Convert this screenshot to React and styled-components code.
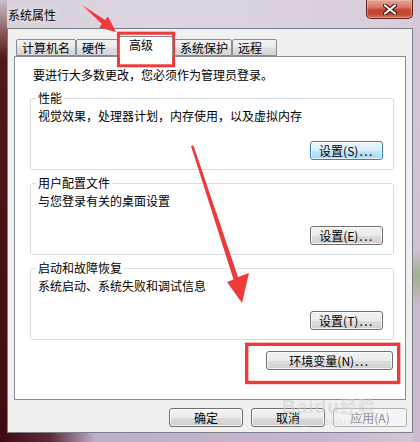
import React from 'react';
import styled, { createGlobalStyle } from 'styled-components';

const Global = createGlobalStyle`
  html, body { margin: 0; padding: 0; }
  body {
    width: 420px; height: 442px; overflow: hidden;
    font-family: "Noto Sans CJK SC", "Noto Sans", sans-serif;
  }
`;

const Window = styled.div`
  position: relative;
  width: 420px;
  height: 442px;
  box-sizing: border-box;
  padding: 0 7px 9px 7px;
  display: flex;
  flex-direction: column;
  overflow: hidden;
  background:
    linear-gradient(to bottom, #cbc1c9 0, #8a5a5c 32px, #51181b 58px, #3e0c10 100%) left top / 7px 100% no-repeat,
    linear-gradient(to bottom, #d6c8d8 0, #d2c0d4 250px, #9fb08e 275px, #cbb9cf 305px, #cdbad2 100%) right top / 7px 100% no-repeat,
    linear-gradient(to right, #3e0c10 0, #5c2a38 50px, #bfaec8 95px, #c9b7cf 330px, #d6c5d8 100%) left bottom / 100% 10px no-repeat,
    linear-gradient(to right, #d8d1db 0, #ddd6e0 40%, #d7cdd9 100%);
`;

const TitleBar = styled.div`
  height: 28px;
  display: flex;
  justify-content: space-between;
  align-items: flex-start;
  flex: none;
`;

const Title = styled.div`
  margin: 8px 0 0 1px;
  font-size: 12px;
  line-height: 14px;
  color: #000;
  text-shadow: 0 0 6px rgba(255,255,255,0.9);
`;

const CloseButton = styled.div`
  width: 47px;
  height: 19px;
  box-sizing: border-box;
  border: 1px solid #5a2119;
  border-top: none;
  border-radius: 0 0 5px 5px;
  background: linear-gradient(to bottom, #e6a597 0%, #d77a66 40%, #c4452f 55%, #c24a33 80%, #d9765c 100%);
  box-shadow: inset 0 0 0 1px rgba(255,200,190,0.45);
  display: flex;
  align-items: center;
  justify-content: center;
`;

const Body = styled.div`
  flex: 1;
  box-sizing: border-box;
  background: #f0f0f0;
  border: 1px solid #7c7f86;
  padding: 0 6px 0 6px;
  display: flex;
  flex-direction: column;
`;

const TabStrip = styled.div`
  display: flex;
  align-items: flex-end;
  padding: 7px 0 0 2px;
  height: 20px;
  box-sizing: content-box;
`;

const Tab = styled.div`
  box-sizing: border-box;
  width: ${p => p.$w}px;
  height: ${p => (p.$active ? 21 : 17)}px;
  margin: ${p => (p.$active ? '0 1px -1px 1px' : '0')};
  position: relative;
  z-index: ${p => (p.$active ? 1 : 0)};
  border: 1px solid #898c95;
  border-bottom: ${p => (p.$active ? 'none' : '1px solid #898c95')};
  border-radius: 2px 2px 0 0;
  background: ${p => (p.$active ? '#ffffff' : 'linear-gradient(to bottom, #f3f3f3 0%, #ebebeb 45%, #dedede 55%, #d6d6d6 100%)')};
  padding: 1px 0 0 ${p => (p.$active ? 9 : 5)}px;
  font-size: 12px;
  line-height: 14px;
  color: #000;
  white-space: nowrap;
`;

const Panel = styled.div`
  box-sizing: border-box;
  height: 344px;
  background: #fff;
  border: 1px solid #898c95;
  padding: 11px 11px 0 15px;
  display: flex;
  flex-direction: column;
`;

const Intro = styled.div`
  margin: 0 0 9px 3px;
  font-size: 12px;
  line-height: 14px;
  color: #000;
`;

const Group = styled.fieldset`
  margin: ${p => (p.$first ? '0' : '6px 0 0 0')};
  padding: 4px 10px 9px 7px;
  border: 1px solid #d5dfe5;
  border-radius: 3px;
  min-width: 0;
  display: flex;
  flex-direction: column;
`;

const Legend = styled.legend`
  padding: 0 2px;
  margin-left: -2px;
  font-size: 12px;
  line-height: 14px;
  color: #000;
`;

const GroupText = styled.div`
  font-size: 12px;
  line-height: 14px;
  color: #000;
`;

const GroupActions = styled.div`
  display: flex;
  justify-content: flex-end;
  margin-top: 18px;
`;

const Button = styled.div`
  box-sizing: border-box;
  width: ${p => p.$w}px;
  height: 19px;
  border: 1px solid ${p => (p.$focus ? '#3c7fb1' : p.$disabled ? '#adb2b5' : '#707070')};
  border-radius: 3px;
  background: ${p =>
    p.$focus
      ? 'linear-gradient(to bottom, #eaf6fd 0%, #d9f0fc 50%, #bee6fd 50%, #a7d9f5 100%)'
      : p.$disabled
      ? '#f4f4f4'
      : 'linear-gradient(to bottom, #f2f2f2 0%, #ebebeb 50%, #dddddd 50%, #cfcfcf 100%)'};
  box-shadow: ${p => (p.$disabled ? 'none' : 'inset 0 0 0 1px rgba(255,255,255,0.75)')};
  display: flex;
  align-items: center;
  justify-content: center;
  font-size: 12px;
  line-height: 14px;
  color: ${p => (p.$disabled ? '#8a8a8a' : '#000')};
  white-space: nowrap;
`;

const Dots = styled.span`
  letter-spacing: 1.5px;
  margin-left: 1px;
`;

const EnvRow = styled.div`
  display: flex;
  justify-content: flex-end;
  margin: 11px 1px 0 0;
`;

const Footer = styled.div`
  display: flex;
  justify-content: flex-end;
  gap: 8px;
  margin: 8px -1px 0 0;
`;

const Overlay = styled.svg`
  position: absolute;
  left: 0;
  top: 0;
  pointer-events: none;
`;

const Watermark = styled.div`
  position: absolute;
  left: 282px;
  top: 396px;
  pointer-events: none;
  display: flex;
  flex-direction: column;
  align-items: center;
  color: rgba(205, 205, 205, 0.55);
  font-family: "Liberation Sans", sans-serif;
`;

const WatermarkMain = styled.div`
  font-size: 19px;
  font-weight: bold;
  line-height: 20px;
  letter-spacing: 1px;
  span { font-family: "Noto Sans CJK SC", sans-serif; font-size: 17px; }
`;

const WatermarkSub = styled.div`
  font-size: 9px;
  line-height: 10px;
`;

const SettingButton = ({ label, accel, focus }) => (
  <Button $w={73} $focus={focus}>
    {label}({accel})<Dots>...</Dots>
  </Button>
);

const groups = [
  { title: '性能', text: '视觉效果，处理器计划，内存使用，以及虚拟内存', accel: 'S', focus: true },
  { title: '用户配置文件', text: '与您登录有关的桌面设置', accel: 'E' },
  { title: '启动和故障恢复', text: '系统启动、系统失败和调试信息', accel: 'T' },
];

const tabs = [
  { label: '计算机名', w: 60 },
  { label: '硬件', w: 42 },
  { label: '高级', w: 54, active: true },
  { label: '系统保护', w: 58 },
  { label: '远程', w: 45 },
];

export default function App() {
  return (
    <>
      <Global />
      <Window>
        <TitleBar>
          <Title>系统属性</Title>
          <CloseButton>
            <svg width="14" height="11" viewBox="0 0 14 11">
              <path d="M2 1.5 L12 9.5 M12 1.5 L2 9.5" stroke="#3b1410" strokeWidth="4.2" strokeLinecap="round" />
              <path d="M2 1.5 L12 9.5 M12 1.5 L2 9.5" stroke="#ffffff" strokeWidth="2.2" strokeLinecap="round" />
            </svg>
          </CloseButton>
        </TitleBar>
        <Body>
          <TabStrip>
            {tabs.map(t => (
              <Tab key={t.label} $w={t.w} $active={t.active}>{t.label}</Tab>
            ))}
          </TabStrip>
          <Panel>
            <Intro>要进行大多数更改，您必须作为管理员登录。</Intro>
            {groups.map((g, i) => (
              <Group key={g.title} $first={i === 0}>
                <Legend>{g.title}</Legend>
                <GroupText>{g.text}</GroupText>
                <GroupActions>
                  <SettingButton label="设置" accel={g.accel} focus={g.focus} />
                </GroupActions>
              </Group>
            ))}
            <EnvRow>
              <Button $w={127}>环境变量(N)<Dots>...</Dots></Button>
            </EnvRow>
          </Panel>
          <Footer>
            <Button $w={74}>确定</Button>
            <Button $w={74}>取消</Button>
            <Button $w={74} $disabled>应用(A)</Button>
          </Footer>
        </Body>
        <Watermark>
          <WatermarkMain>Baidu<span>经验</span></WatermarkMain>
          <WatermarkSub>jingyan.baidu.com</WatermarkSub>
        </Watermark>
        <Overlay width="420" height="442" viewBox="0 0 420 442">
          <rect x="118.5" y="33.2" width="55" height="32.6" fill="none" stroke="#ef3a3a" strokeWidth="3" />
          <rect x="246.7" y="344.3" width="152" height="38.2" fill="none" stroke="#ef3a3a" strokeWidth="3.4" />
          <polygon points="82,5 105.05,20.04 107.9,16.5 116,32 99.1,27.5 101.95,23.96" fill="#ef3a3a" />
          <polygon points="191,146 193.5,145.5 238,277 249,273 242,303 227,282 233.5,279.5" fill="#ef3a3a" />
        </Overlay>
      </Window>
    </>
  );
}
